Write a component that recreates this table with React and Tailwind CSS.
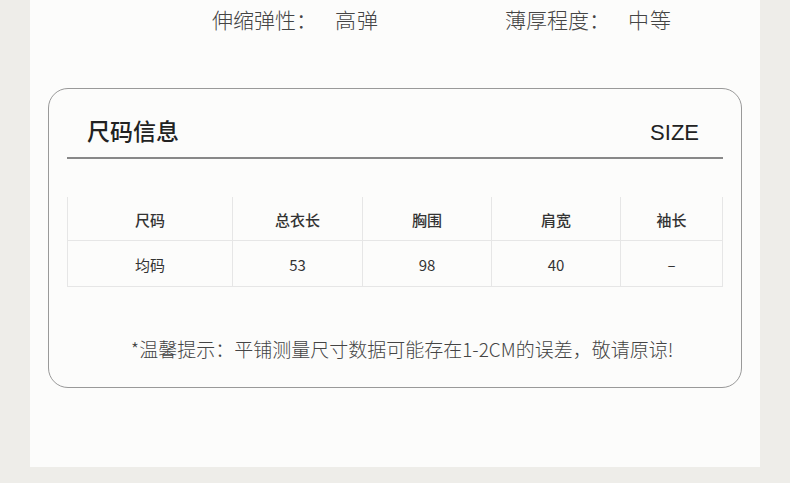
import React from 'react';

const CJK = "font-['Noto_Sans_CJK_SC',sans-serif]";

const columns = ['尺码', '总衣长', '胸围', '肩宽', '袖长'];
const rows = [['均码', '53', '98', '40', '–']];
const widths = ['w-[164px]', 'w-[130px]', 'w-[129px]', 'w-[129px]', 'flex-1'];

const SizeTable = () => (
    <div className="mt-[38px] mx-[18px] border-x border-b border-[#e6e6e6]">
        <div className="flex h-[44px] border-b border-[#e6e6e6]">
            {columns.map((c, i) => (
                <div
                    key={c}
                    className={`${widths[i]} flex items-center justify-center pt-[3px] text-[15px] font-medium text-[#333] ${i > 0 ? 'border-l border-[#e6e6e6]' : ''}`}
                >
                    {c}
                </div>
            ))}
        </div>
        {rows.map((r) => (
            <div key={r[0]} className="flex h-[45px]">
                {r.map((v, i) => (
                    <div
                        key={i}
                        className={`${widths[i]} flex items-center justify-center pt-[3px] text-[15px] text-[#333] ${i > 0 ? 'border-l border-[#e6e6e6]' : ''}`}
                    >
                        {v}
                    </div>
                ))}
            </div>
        ))}
    </div>
);

export default function App() {
    return (
        <div className={`w-[790px] h-[483px] bg-[#eeede9] ${CJK}`}>
            <div className="ml-[30px] w-[730px] h-[467px] bg-[#fcfcfb] overflow-hidden">
                {/* fabric properties */}
                <div className="flex pt-[4px] text-[21px] leading-[30px] font-light text-[#444]">
                    <div className="ml-[182px] w-[293px] flex">
                        <span>伸缩弹性：</span>
                        <span className="ml-[18px] tracking-[1px]">高弹</span>
                    </div>
                    <div className="flex">
                        <span>薄厚程度：</span>
                        <span className="ml-[18px] tracking-[1px]">中等</span>
                    </div>
                </div>

                {/* size card */}
                <div className="mt-[54px] ml-[18px] w-[694px] border border-[#999] rounded-[20px]">
                    <div className="mx-[18px] pt-[25px] pb-[11px] pl-[20px] pr-[24px] flex items-center justify-between border-b-2 border-[#888]">
                        <span className="text-[23px] leading-[32px] font-medium text-[#222]">尺码信息</span>
                        <span className="text-[22px] leading-[26px] text-[#222] font-['Liberation_Sans',sans-serif] pt-[5px]">SIZE</span>
                    </div>

                    <SizeTable />

                    <p className="mt-[49px] mb-[25px] text-center pl-[14px] text-[19px] leading-[26px] font-light text-[#444]">
                        *温馨提示：平铺测量尺寸数据可能存在1-2CM的误差，敬请原谅!
                    </p>
                </div>
            </div>
        </div>
    );
}
